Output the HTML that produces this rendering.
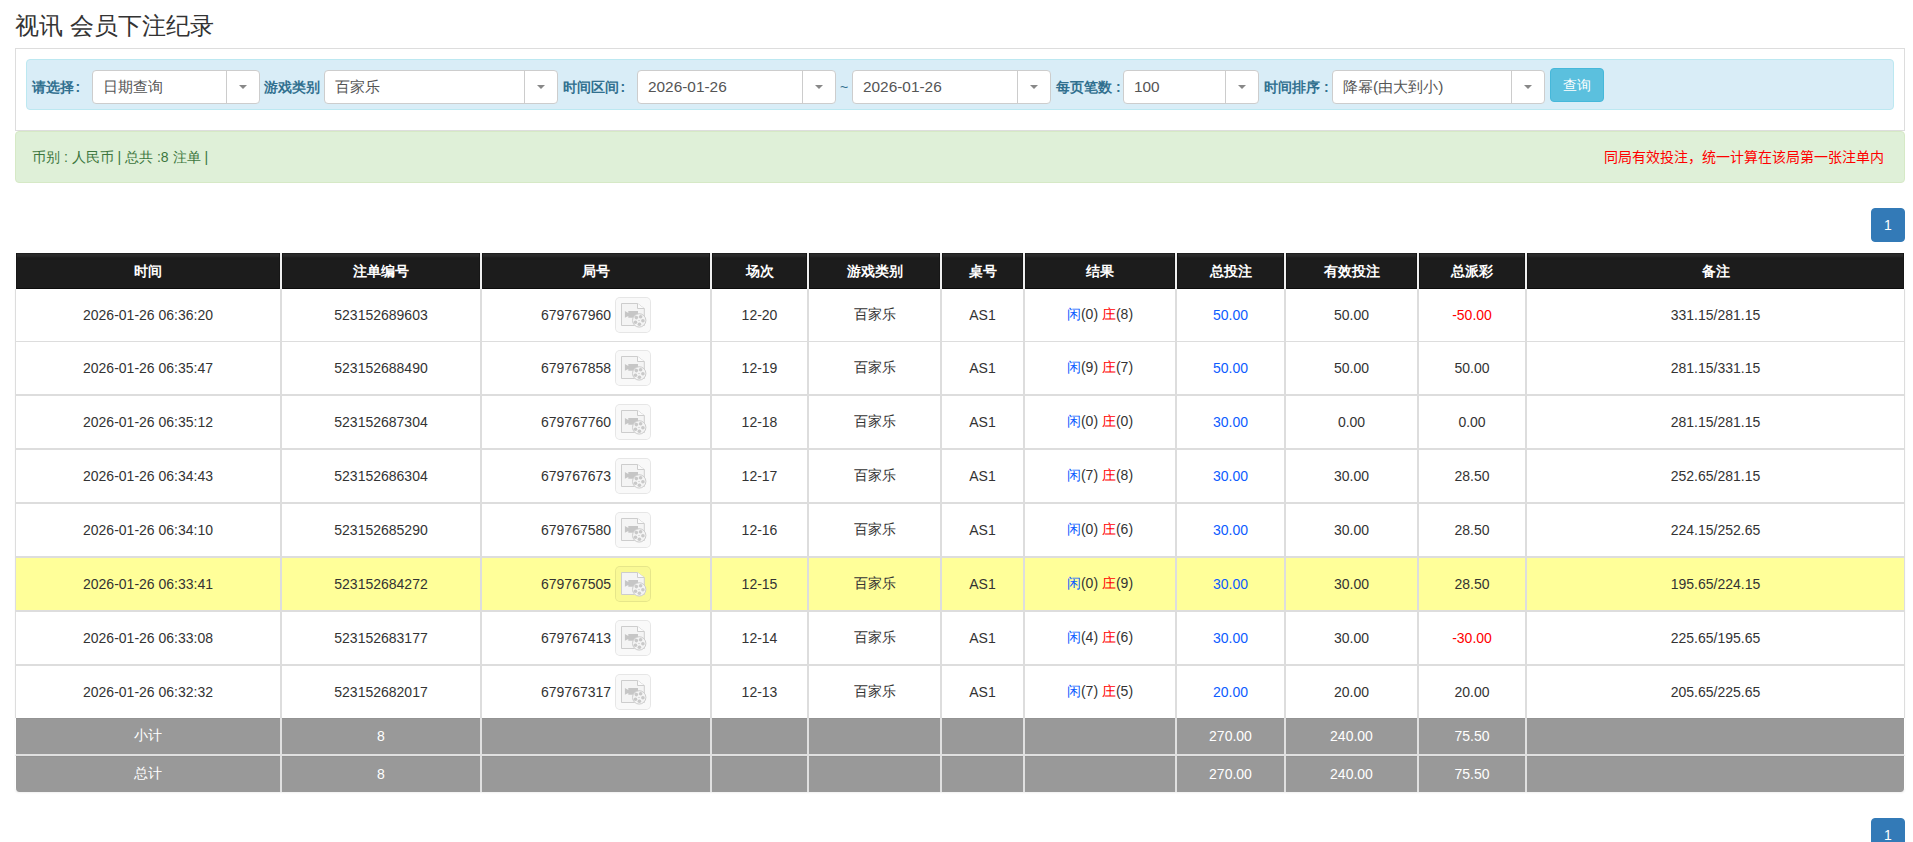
<!DOCTYPE html>
<html><head><meta charset="utf-8">
<style>
*{box-sizing:border-box;margin:0;padding:0}
html,body{width:1913px;height:842px;overflow:hidden;background:#fff}
body{font-family:"Liberation Sans",sans-serif;font-size:14px;color:#333;position:relative}
.abs{position:absolute}
#title{left:15px;top:10px;font-size:24px;line-height:32px;color:#333;white-space:nowrap}
#box{left:15px;top:48px;width:1890px;height:83px;border:1px solid #ddd}
#bar{left:26px;top:59px;width:1868px;height:51px;background:#d9edf7;border:1px solid #bce8f1;border-radius:4px}
.lbl{position:absolute;top:78px;font-weight:bold;color:#31708f;font-size:14px;line-height:18px;white-space:nowrap}
.sel{position:absolute;top:70px;height:34px;background:#fff;border:1px solid #cdcdcd;border-radius:4px}
.sel .t{position:absolute;left:10px;top:6.5px;font-size:15.4px;line-height:18px;color:#555;white-space:nowrap}
.sel .d{position:absolute;right:32px;top:0;bottom:0;width:1px;background:#ccc}
.sel .c{position:absolute;right:12px;top:14px;width:0;height:0;border-left:4px solid transparent;border-right:4px solid transparent;border-top:4px solid #888}
#btn{left:1550px;top:68px;width:54px;height:34px;background:#5bc0de;border:1px solid #46b8da;border-radius:4px;color:#fff;font-size:14px;line-height:32px;text-align:center}
#green{left:15px;top:131px;width:1890px;height:52px;background:#dff0d8;border:1px solid #d6e9c6;border-radius:4px}
#gl{left:32px;top:149px;font-size:14px;line-height:16px;color:#3c763d;white-space:nowrap}
#gr{right:29px;top:149px;font-size:14px;line-height:16px;color:#f00;white-space:nowrap}
.pg{position:absolute;left:1871px;width:34px;height:34px;background:#337ab7;border:1px solid #337ab7;border-radius:4px;color:#fff;text-align:center;line-height:32px;font-size:14px}
#tbl{position:absolute;left:15px;top:253px;border-collapse:separate;border-spacing:0;table-layout:fixed;width:1890px}
#tbl th{height:36px;background:linear-gradient(#1e1e1e 0,#1e1e1e 1px,#2a2a2a 1px,#292929 3px,#1c1c1c 5px);box-shadow:inset 1px 0 0 #161616,inset -1px 0 0 #161616,inset 0 -1px 0 #0c0c0c;color:#fff;font-weight:bold;font-size:14px;border-left:1px solid #f0f0f0;border-right:1px solid #f0f0f0;text-align:center;vertical-align:middle;padding:2px 0 0 0}
#tbl th:first-child{border-left-color:#fff}
#tbl th:last-child{border-right-color:#fff}
#tbl td{height:54px;text-align:center;vertical-align:middle;padding:0;border-left:1px solid #ddd;border-right:1px solid #ddd;border-bottom:2px solid #ddd;white-space:nowrap}
#tbl tr.r1 td{height:53px;border-bottom-width:1px}
#tbl tr.r8 td{height:52px;border-bottom:0}
#tbl tr.y td{background:#ffff99}
#tbl tr.s td{height:38px;background:#999;color:#fff;border-left-color:#e0e0e0;border-right-color:#e0e0e0;border-bottom:2px solid #e0e0e0}
#tbl tr.s2 td{height:36px;border-bottom:0}
#tbl tr.s td:first-child{border-left-color:#fff}
#tbl tr.s td:last-child{border-right-color:#fff}
#tbl tr.s2 td:first-child{border-bottom-left-radius:4px}
#tbl tr.s2 td:last-child{border-bottom-right-radius:4px}
#tbl{border-radius:0 0 4px 4px;box-shadow:0 1px 2px rgba(0,0,0,.06)}
#tbl tr.s td{box-shadow:inset 0 1px 0 rgba(0,0,0,.04)}
.b{color:#0d5cff}.r{color:#f00}
.vb{display:inline-block;vertical-align:-13px;width:36px;height:36px;border:1px solid rgba(0,0,0,0.08);border-radius:5px;background:rgba(0,0,0,0.025);position:relative;margin-left:0}
.vb svg{position:absolute;left:-1px;top:-1px}
</style></head><body>
<div id="title" class="abs">视讯 会员下注纪录</div>
<div id="box" class="abs"></div>
<div id="bar" class="abs"></div>
<div class="lbl" style="left:32px">请选择<span style="margin-left:1.5px">:</span></div>
<div class="sel" style="left:92px;width:168px"><span class="t">日期查询</span><span class="d"></span><span class="c"></span></div>
<div class="lbl" style="left:264px">游戏类别</div>
<div class="sel" style="left:324px;width:234px"><span class="t">百家乐</span><span class="d"></span><span class="c"></span></div>
<div class="lbl" style="left:563px">时间区间<span style="margin-left:1.5px">:</span></div>
<div class="sel" style="left:637px;width:199px"><span class="t">2026-01-26</span><span class="d"></span><span class="c"></span></div>
<div class="lbl" style="left:840px;font-weight:normal">~</div>
<div class="sel" style="left:852px;width:199px"><span class="t">2026-01-26</span><span class="d"></span><span class="c"></span></div>
<div class="lbl" style="left:1056px">每页笔数 :</div>
<div class="sel" style="left:1123px;width:136px"><span class="t">100</span><span class="d"></span><span class="c"></span></div>
<div class="lbl" style="left:1264px">时间排序 :</div>
<div class="sel" style="left:1332px;width:213px"><span class="t">降幂(由大到小)</span><span class="d"></span><span class="c"></span></div>
<div id="btn" class="abs">查询</div>
<div id="green" class="abs"></div>
<div id="gl" class="abs">币别 : 人民币 | 总共 :8 注单 |</div>
<div id="gr" class="abs" lang="zh-CN">同局有效投注，统一计算在该局第一张注单内</div>
<div class="pg" style="top:208px">1</div>

<table id="tbl">
<colgroup><col style="width:266px"><col style="width:200px"><col style="width:230px"><col style="width:97px"><col style="width:133px"><col style="width:83px"><col style="width:152px"><col style="width:109px"><col style="width:133px"><col style="width:108px"><col style="width:379px"></colgroup>
<thead><tr><th>时间</th><th>注单编号</th><th>局号</th><th>场次</th><th>游戏类别</th><th>桌号</th><th>结果</th><th>总投注</th><th>有效投注</th><th>总派彩</th><th>备注</th></tr></thead>
<tbody>
<tr class="r1"><td>2026-01-26 06:36:20</td><td>523152689603</td><td>679767960 <span class="vb"><svg width="36" height="36" viewBox="0 0 36 36"><path d="M6.5 6.5H22.5L29.3 11.6V28.5H6.5Z" fill="#f4f4f4" stroke="#cdcdcd"/><path d="M22.5 6.5V11.5H29.3" fill="#fbfbfb" stroke="#cdcdcd"/><path d="M9.9 14L13.3 16V14H23V20.8H13.3V19L9.9 20.8Z" fill="#c6c6c6"/><circle cx="24.2" cy="23.4" r="6.7" fill="#f4f4f4" stroke="#cdcdcd"/><g fill="#c9c9c9"><circle cx="21.35" cy="20.6" r="1.8"/><circle cx="25.6" cy="19.7" r="1.8"/><circle cx="27.9" cy="23.7" r="1.8"/><circle cx="24.4" cy="27.2" r="1.8"/><circle cx="20.45" cy="25.3" r="1.8"/><rect x="23.3" y="23.1" width="1.4" height="0.8"/></g></svg></span></td><td>12-20</td><td>百家乐</td><td>AS1</td><td><span class="b">闲</span>(0) <span class="r">庄</span>(8)</td><td class="b">50.00</td><td>50.00</td><td class="r">-50.00</td><td>331.15/281.15</td></tr>
<tr><td>2026-01-26 06:35:47</td><td>523152688490</td><td>679767858 <span class="vb"><svg width="36" height="36" viewBox="0 0 36 36"><path d="M6.5 6.5H22.5L29.3 11.6V28.5H6.5Z" fill="#f4f4f4" stroke="#cdcdcd"/><path d="M22.5 6.5V11.5H29.3" fill="#fbfbfb" stroke="#cdcdcd"/><path d="M9.9 14L13.3 16V14H23V20.8H13.3V19L9.9 20.8Z" fill="#c6c6c6"/><circle cx="24.2" cy="23.4" r="6.7" fill="#f4f4f4" stroke="#cdcdcd"/><g fill="#c9c9c9"><circle cx="21.35" cy="20.6" r="1.8"/><circle cx="25.6" cy="19.7" r="1.8"/><circle cx="27.9" cy="23.7" r="1.8"/><circle cx="24.4" cy="27.2" r="1.8"/><circle cx="20.45" cy="25.3" r="1.8"/><rect x="23.3" y="23.1" width="1.4" height="0.8"/></g></svg></span></td><td>12-19</td><td>百家乐</td><td>AS1</td><td><span class="b">闲</span>(9) <span class="r">庄</span>(7)</td><td class="b">50.00</td><td>50.00</td><td>50.00</td><td>281.15/331.15</td></tr>
<tr><td>2026-01-26 06:35:12</td><td>523152687304</td><td>679767760 <span class="vb"><svg width="36" height="36" viewBox="0 0 36 36"><path d="M6.5 6.5H22.5L29.3 11.6V28.5H6.5Z" fill="#f4f4f4" stroke="#cdcdcd"/><path d="M22.5 6.5V11.5H29.3" fill="#fbfbfb" stroke="#cdcdcd"/><path d="M9.9 14L13.3 16V14H23V20.8H13.3V19L9.9 20.8Z" fill="#c6c6c6"/><circle cx="24.2" cy="23.4" r="6.7" fill="#f4f4f4" stroke="#cdcdcd"/><g fill="#c9c9c9"><circle cx="21.35" cy="20.6" r="1.8"/><circle cx="25.6" cy="19.7" r="1.8"/><circle cx="27.9" cy="23.7" r="1.8"/><circle cx="24.4" cy="27.2" r="1.8"/><circle cx="20.45" cy="25.3" r="1.8"/><rect x="23.3" y="23.1" width="1.4" height="0.8"/></g></svg></span></td><td>12-18</td><td>百家乐</td><td>AS1</td><td><span class="b">闲</span>(0) <span class="r">庄</span>(0)</td><td class="b">30.00</td><td>0.00</td><td>0.00</td><td>281.15/281.15</td></tr>
<tr><td>2026-01-26 06:34:43</td><td>523152686304</td><td>679767673 <span class="vb"><svg width="36" height="36" viewBox="0 0 36 36"><path d="M6.5 6.5H22.5L29.3 11.6V28.5H6.5Z" fill="#f4f4f4" stroke="#cdcdcd"/><path d="M22.5 6.5V11.5H29.3" fill="#fbfbfb" stroke="#cdcdcd"/><path d="M9.9 14L13.3 16V14H23V20.8H13.3V19L9.9 20.8Z" fill="#c6c6c6"/><circle cx="24.2" cy="23.4" r="6.7" fill="#f4f4f4" stroke="#cdcdcd"/><g fill="#c9c9c9"><circle cx="21.35" cy="20.6" r="1.8"/><circle cx="25.6" cy="19.7" r="1.8"/><circle cx="27.9" cy="23.7" r="1.8"/><circle cx="24.4" cy="27.2" r="1.8"/><circle cx="20.45" cy="25.3" r="1.8"/><rect x="23.3" y="23.1" width="1.4" height="0.8"/></g></svg></span></td><td>12-17</td><td>百家乐</td><td>AS1</td><td><span class="b">闲</span>(7) <span class="r">庄</span>(8)</td><td class="b">30.00</td><td>30.00</td><td>28.50</td><td>252.65/281.15</td></tr>
<tr><td>2026-01-26 06:34:10</td><td>523152685290</td><td>679767580 <span class="vb"><svg width="36" height="36" viewBox="0 0 36 36"><path d="M6.5 6.5H22.5L29.3 11.6V28.5H6.5Z" fill="#f4f4f4" stroke="#cdcdcd"/><path d="M22.5 6.5V11.5H29.3" fill="#fbfbfb" stroke="#cdcdcd"/><path d="M9.9 14L13.3 16V14H23V20.8H13.3V19L9.9 20.8Z" fill="#c6c6c6"/><circle cx="24.2" cy="23.4" r="6.7" fill="#f4f4f4" stroke="#cdcdcd"/><g fill="#c9c9c9"><circle cx="21.35" cy="20.6" r="1.8"/><circle cx="25.6" cy="19.7" r="1.8"/><circle cx="27.9" cy="23.7" r="1.8"/><circle cx="24.4" cy="27.2" r="1.8"/><circle cx="20.45" cy="25.3" r="1.8"/><rect x="23.3" y="23.1" width="1.4" height="0.8"/></g></svg></span></td><td>12-16</td><td>百家乐</td><td>AS1</td><td><span class="b">闲</span>(0) <span class="r">庄</span>(6)</td><td class="b">30.00</td><td>30.00</td><td>28.50</td><td>224.15/252.65</td></tr>
<tr class="y"><td>2026-01-26 06:33:41</td><td>523152684272</td><td>679767505 <span class="vb"><svg width="36" height="36" viewBox="0 0 36 36"><path d="M6.5 6.5H22.5L29.3 11.6V28.5H6.5Z" fill="#f4f4f4" stroke="#cdcdcd"/><path d="M22.5 6.5V11.5H29.3" fill="#fbfbfb" stroke="#cdcdcd"/><path d="M9.9 14L13.3 16V14H23V20.8H13.3V19L9.9 20.8Z" fill="#c6c6c6"/><circle cx="24.2" cy="23.4" r="6.7" fill="#f4f4f4" stroke="#cdcdcd"/><g fill="#c9c9c9"><circle cx="21.35" cy="20.6" r="1.8"/><circle cx="25.6" cy="19.7" r="1.8"/><circle cx="27.9" cy="23.7" r="1.8"/><circle cx="24.4" cy="27.2" r="1.8"/><circle cx="20.45" cy="25.3" r="1.8"/><rect x="23.3" y="23.1" width="1.4" height="0.8"/></g></svg></span></td><td>12-15</td><td>百家乐</td><td>AS1</td><td><span class="b">闲</span>(0) <span class="r">庄</span>(9)</td><td class="b">30.00</td><td>30.00</td><td>28.50</td><td>195.65/224.15</td></tr>
<tr><td>2026-01-26 06:33:08</td><td>523152683177</td><td>679767413 <span class="vb"><svg width="36" height="36" viewBox="0 0 36 36"><path d="M6.5 6.5H22.5L29.3 11.6V28.5H6.5Z" fill="#f4f4f4" stroke="#cdcdcd"/><path d="M22.5 6.5V11.5H29.3" fill="#fbfbfb" stroke="#cdcdcd"/><path d="M9.9 14L13.3 16V14H23V20.8H13.3V19L9.9 20.8Z" fill="#c6c6c6"/><circle cx="24.2" cy="23.4" r="6.7" fill="#f4f4f4" stroke="#cdcdcd"/><g fill="#c9c9c9"><circle cx="21.35" cy="20.6" r="1.8"/><circle cx="25.6" cy="19.7" r="1.8"/><circle cx="27.9" cy="23.7" r="1.8"/><circle cx="24.4" cy="27.2" r="1.8"/><circle cx="20.45" cy="25.3" r="1.8"/><rect x="23.3" y="23.1" width="1.4" height="0.8"/></g></svg></span></td><td>12-14</td><td>百家乐</td><td>AS1</td><td><span class="b">闲</span>(4) <span class="r">庄</span>(6)</td><td class="b">30.00</td><td>30.00</td><td class="r">-30.00</td><td>225.65/195.65</td></tr>
<tr class="r8"><td>2026-01-26 06:32:32</td><td>523152682017</td><td>679767317 <span class="vb"><svg width="36" height="36" viewBox="0 0 36 36"><path d="M6.5 6.5H22.5L29.3 11.6V28.5H6.5Z" fill="#f4f4f4" stroke="#cdcdcd"/><path d="M22.5 6.5V11.5H29.3" fill="#fbfbfb" stroke="#cdcdcd"/><path d="M9.9 14L13.3 16V14H23V20.8H13.3V19L9.9 20.8Z" fill="#c6c6c6"/><circle cx="24.2" cy="23.4" r="6.7" fill="#f4f4f4" stroke="#cdcdcd"/><g fill="#c9c9c9"><circle cx="21.35" cy="20.6" r="1.8"/><circle cx="25.6" cy="19.7" r="1.8"/><circle cx="27.9" cy="23.7" r="1.8"/><circle cx="24.4" cy="27.2" r="1.8"/><circle cx="20.45" cy="25.3" r="1.8"/><rect x="23.3" y="23.1" width="1.4" height="0.8"/></g></svg></span></td><td>12-13</td><td>百家乐</td><td>AS1</td><td><span class="b">闲</span>(7) <span class="r">庄</span>(5)</td><td class="b">20.00</td><td>20.00</td><td>20.00</td><td>205.65/225.65</td></tr>
<tr class="s"><td>小计</td><td>8</td><td></td><td></td><td></td><td></td><td></td><td>270.00</td><td>240.00</td><td>75.50</td><td></td></tr>
<tr class="s s2"><td>总计</td><td>8</td><td></td><td></td><td></td><td></td><td></td><td>270.00</td><td>240.00</td><td>75.50</td><td></td></tr>
</tbody></table>
<div class="pg" style="top:818px">1</div>
</body></html>
